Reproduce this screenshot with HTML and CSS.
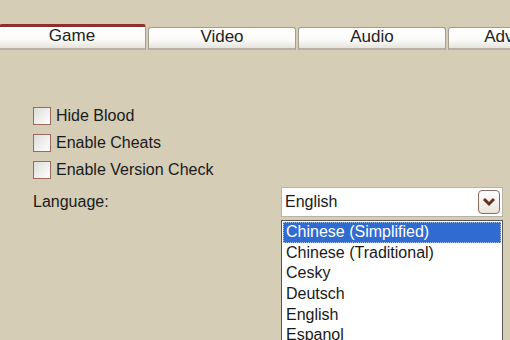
FILE: index.html
```html
<!DOCTYPE html>
<html lang="en">
<head>
    <meta charset="UTF-8">
    <title>Options</title>
    <link rel="stylesheet" href="styles.css">
</head>
<body>
    <!-- Tab strip -->
    <div class="tabs">
        <div class="tab active">Game</div>
        <div class="tab">Video</div>
        <div class="tab">Audio</div>
        <div class="tab">Advanced</div>
    </div>

    <div class="panel">
        <!-- Game options -->
        <label class="check"><span class="box"></span>Hide Blood</label>
        <label class="check"><span class="box"></span>Enable Cheats</label>
        <label class="check"><span class="box"></span>Enable Version Check</label>

        <div class="lang-row">
            <div class="lang-label">Language:</div>
            <div class="combo-wrap">
                <div class="combo">
                    <span>English</span>
                    <span class="arrow">
                        <svg width="14" height="10" viewBox="0 0 14 10">
                            <path d="M2 2 L7 7 L12 2" fill="none" stroke="#6b2f22" stroke-width="3"/>
                        </svg>
                    </span>
                </div>
                <ul class="list">
                    <li class="selected">Chinese (Simplified)</li>
                    <li>Chinese (Traditional)</li>
                    <li>Cesky</li>
                    <li>Deutsch</li>
                    <li>English</li>
                    <li>Espanol</li>
                </ul>
            </div>
        </div>
    </div>
</body>
</html>
```

FILE: styles.css
```css
/* Dialog background */
body {
    margin: 0;
    background-color: #d5cdb6;
    font-family: "Liberation Sans", Arial, sans-serif;
    font-size: 16px;
    color: #1a1a1a;
    overflow: hidden;
}
/* Tab strip */
.tabs {
    display: flex;
    align-items: flex-end;
    gap: 2px;
    margin-top: 24px;
    height: 26px;
    white-space: nowrap;
}
.tab {
    flex: 0 0 148px;
    height: 23px;
    box-sizing: border-box;
    border: 1px solid #a39d90;
    border-bottom: 2px solid #b8b2a4;
    border-radius: 3px 3px 0 0;
    background: linear-gradient(#ffffff, #fafaf8 60%, #e6e3dc);
    text-align: center;
    line-height: 18px;
    font-size: 17px;
    color: #222;
}
.tab.active {
    flex-basis: 147px;
    height: 26px;
    margin-left: -1px;
    border-top: 3px solid #8f2f2c;
    border-left: none;
    line-height: 18px;
}
/* Main panel */
.panel {
    padding: 52px 0 0 33px;
}
.check {
    display: flex;
    align-items: center;
    height: 27px;
}
.check .box {
    width: 16px;
    height: 16px;
    border: 1px solid #9b6a5c;
    background: linear-gradient(135deg, #dcdcd8, #ffffff);
    margin-right: 5px;
}
/* Language combo */
.lang-row {
    display: flex;
    margin-top: 4px;
}
.lang-label {
    width: 248px;
    height: 30px;
    line-height: 30px;
}
.combo-wrap {
    width: 222px;
}
.combo {
    display: flex;
    align-items: center;
    justify-content: space-between;
    height: 30px;
    box-sizing: border-box;
    border: 1px solid #b9b3a5;
    background-color: #fff;
    padding: 0 2px 0 3px;
}
.arrow {
    display: flex;
    align-items: center;
    justify-content: center;
    width: 20px;
    height: 22px;
    border: 1px solid #8c6b5e;
    border-radius: 4px;
    background: linear-gradient(#ffffff, #e9e4dc);
}
.list {
    list-style: none;
    margin: 3px 0 0;
    padding: 1px;
    height: 130px;
    border: 1px solid #555;
    background-color: #fff;
}
.list li {
    height: 20.7px;
    line-height: 20px;
    padding-left: 3px;
}
.list li.selected {
    background-color: #2f6bd0;
    color: #fff;
    outline: 1px dotted #9fc0f0;
    outline-offset: -1px;
}
```
